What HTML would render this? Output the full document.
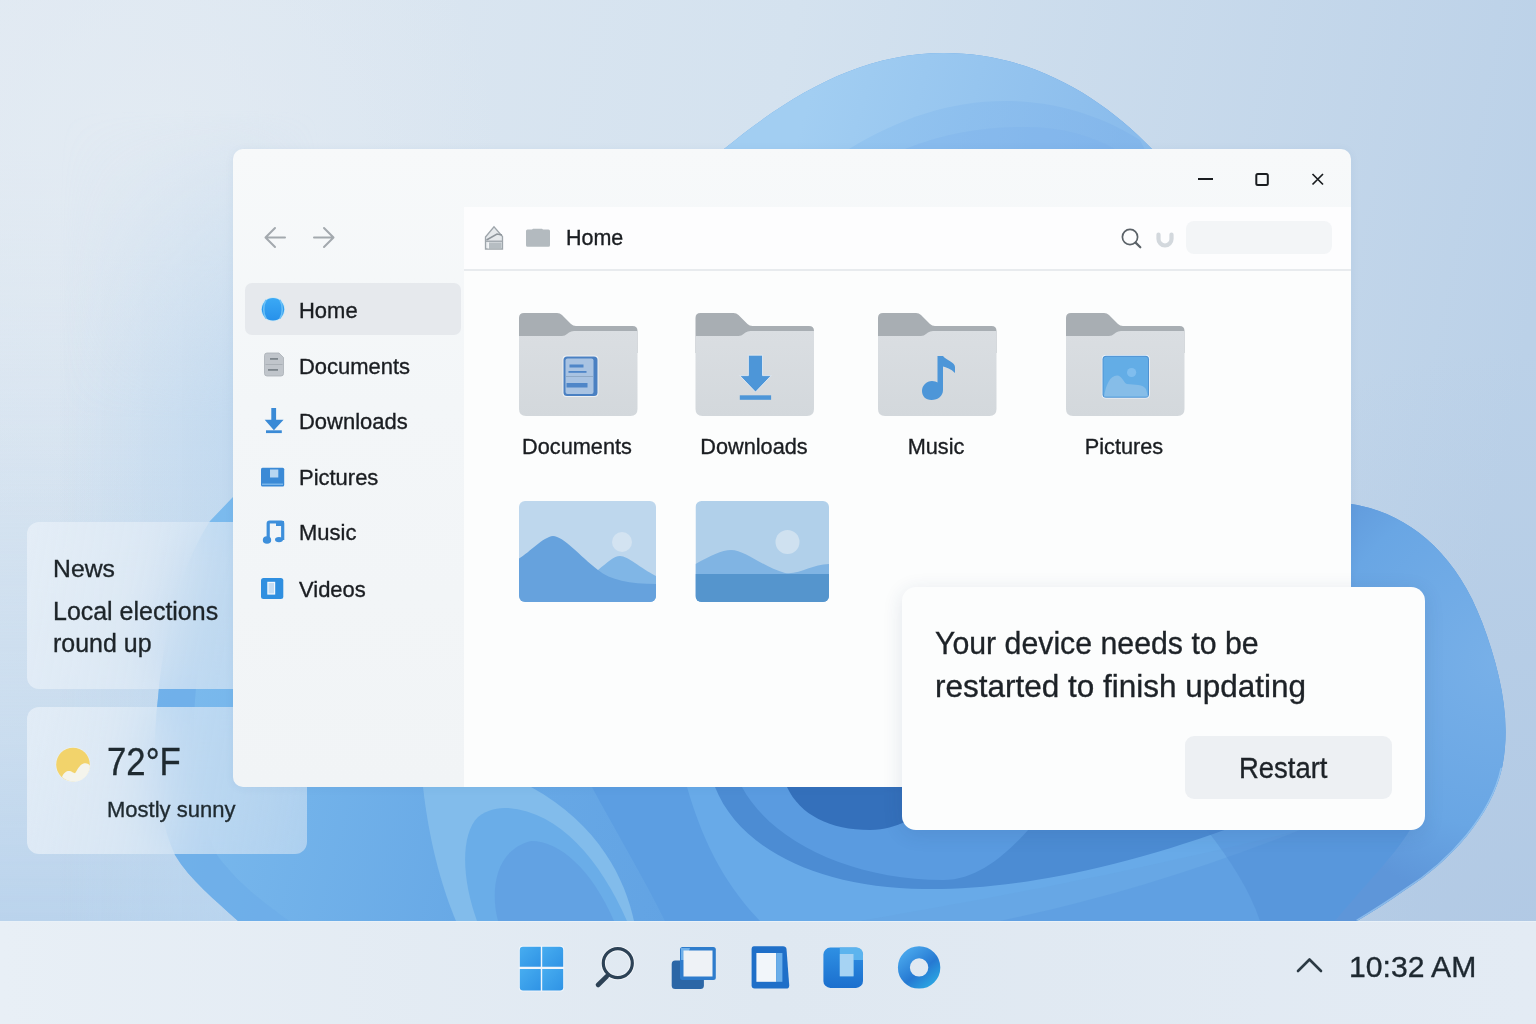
<!DOCTYPE html>
<html><head><meta charset="utf-8">
<style>
html,body{margin:0;padding:0;}
body{width:1536px;height:1024px;position:relative;overflow:hidden;font-family:"Liberation Sans",sans-serif;color:#1c2126;background:#d3e2f0;}
.a{position:absolute;}
.t{position:absolute;white-space:nowrap;line-height:1;-webkit-text-stroke:0.35px currentColor;}
svg{position:absolute;overflow:visible;}
</style></head>
<body>
<svg style="left:0;top:0" width="1536" height="1024" viewBox="0 0 1536 1024">
<defs>
 <linearGradient id="bgg" x1="0" y1="0" x2="1536" y2="300" gradientUnits="userSpaceOnUse">
  <stop offset="0" stop-color="#e0e9f2"/>
  <stop offset="0.5" stop-color="#d4e2ef"/>
  <stop offset="1" stop-color="#bbd1e8"/>
 </linearGradient>
 <linearGradient id="bgv" x1="0" y1="150" x2="0" y2="920" gradientUnits="userSpaceOnUse">
  <stop offset="0" stop-color="#bed6ed" stop-opacity="0"/>
  <stop offset="0.5" stop-color="#bed6ed" stop-opacity="0.35"/>
  <stop offset="0.75" stop-color="#bed6ed" stop-opacity="0.6"/>
  <stop offset="1" stop-color="#bad3ec" stop-opacity="1"/>
 </linearGradient>
 <linearGradient id="bgh" x1="0" y1="0" x2="1536" y2="0" gradientUnits="userSpaceOnUse">
  <stop offset="0" stop-color="#fff"/>
  <stop offset="0.45" stop-color="#fff"/>
  <stop offset="0.8" stop-color="#000"/>
 </linearGradient>
 <radialGradient id="rdark" cx="1536" cy="950" r="600" gradientUnits="userSpaceOnUse">
  <stop offset="0" stop-color="#abc4e2" stop-opacity="0.6"/>
  <stop offset="1" stop-color="#abc4e2" stop-opacity="0"/>
 </radialGradient>
 <linearGradient id="glowl" x1="60" y1="0" x2="320" y2="0" gradientUnits="userSpaceOnUse">
  <stop offset="0" stop-color="#b9d5ef" stop-opacity="0"/>
  <stop offset="0.67" stop-color="#b9d5ef" stop-opacity="0.7"/>
  <stop offset="1" stop-color="#b9d5ef" stop-opacity="0"/>
 </linearGradient>
 <linearGradient id="glowv" x1="0" y1="110" x2="0" y2="420" gradientUnits="userSpaceOnUse">
  <stop offset="0" stop-color="#fff" stop-opacity="0"/>
  <stop offset="1" stop-color="#fff" stop-opacity="1"/>
 </linearGradient>
 <mask id="mglow"><rect x="0" y="0" width="400" height="1024" fill="url(#glowv)"/></mask>
 <mask id="mleft"><rect width="1536" height="1024" fill="url(#bgh)"/></mask>
 <radialGradient id="bgl" cx="120" cy="160" r="380" gradientUnits="userSpaceOnUse">
  <stop offset="0" stop-color="#e3ebf3" stop-opacity="0.9"/>
  <stop offset="1" stop-color="#e3ebf3" stop-opacity="0"/>
 </radialGradient>
 <linearGradient id="arc" x1="820" y1="60" x2="1120" y2="150" gradientUnits="userSpaceOnUse">
  <stop offset="0" stop-color="#a2cef2"/>
  <stop offset="1" stop-color="#8abcec"/>
 </linearGradient>
 <linearGradient id="arc2" x1="880" y1="100" x2="1120" y2="150" gradientUnits="userSpaceOnUse">
  <stop offset="0" stop-color="#8cc0ef"/>
  <stop offset="1" stop-color="#7fb3ea"/>
 </linearGradient>
 <linearGradient id="body" x1="160" y1="600" x2="1350" y2="920" gradientUnits="userSpaceOnUse">
  <stop offset="0" stop-color="#7dbcee"/>
  <stop offset="0.3" stop-color="#68a9e6"/>
  <stop offset="0.7" stop-color="#5a9be0"/>
  <stop offset="1" stop-color="#5797dd"/>
 </linearGradient>
 <linearGradient id="rlobe" x1="1340" y1="600" x2="1500" y2="700" gradientUnits="userSpaceOnUse">
  <stop offset="0" stop-color="#64a2e4"/>
  <stop offset="1" stop-color="#7ab4ea"/>
 </linearGradient>
 <clipPath id="bloom">
  <path d="M724 149 C790 95 860 53 944 53 C1030 53 1100 95 1152 149 L1300 300 L1351 504 C1405 512 1455 550 1482 622 C1500 670 1512 720 1502 768 C1492 815 1450 862 1405 890 C1388 902 1372 912 1357 921 L238 921 C215 900 190 880 175 855 C155 810 152 750 158 698 C165 620 185 560 210 521 L232 498 L260 470 L300 300 Z"/>
 </clipPath>
 <radialGradient id="rlobe2" cx="1500" cy="660" r="240" gradientUnits="userSpaceOnUse">
  <stop offset="0" stop-color="#78b0e8"/>
  <stop offset="0.7" stop-color="#69a6e4"/>
  <stop offset="1" stop-color="#5e96d9"/>
 </radialGradient>
</defs>
<rect width="1536" height="1024" fill="url(#bgg)"/>
<rect x="0" y="0" width="1536" height="1024" fill="url(#bgv)" mask="url(#mleft)"/>
<rect x="700" y="0" width="836" height="1024" fill="url(#rdark)"/>
<rect x="0" y="0" width="700" height="700" fill="url(#bgl)"/>
<rect x="0" y="100" width="320" height="830" fill="url(#glowl)" mask="url(#mglow)"/>
<g clip-path="url(#bloom)">
<rect x="100" y="40" width="1436" height="900" fill="url(#body)"/>
<!-- top arc -->
<rect x="700" y="40" width="500" height="110" fill="url(#arc)"/>
<path d="M849 149 C900 118 950 101 1005 101 C1060 101 1105 118 1140 140 L1150 160 L840 160 Z" fill="url(#arc2)" opacity="0.6"/>
<path d="M905 149 C945 133 985 127 1025 127 C1060 127 1090 135 1115 149 Z" fill="#7cb1ea" opacity="0.3"/>
<!-- right lobe -->
<!-- left lobe inner light band -->
<path d="M217 855 C200 820 190 760 195 700 C200 640 215 580 233 540 L100 540 L100 921 L289 921 C260 900 235 880 217 855 Z" fill="#6cace8" opacity="0.7"/>
<!-- bottom tongue -->
<path d="M423 787 C430 850 445 895 456 921 L634 921 C625 880 600 825 531 787 Z" fill="#82bceb"/>
<path d="M477 921 C462 880 460 835 478 817 C488 809 498 808 508 808 C560 812 600 860 627 921 Z" fill="#6aade8"/>
<path d="M498 921 C490 890 495 850 531 841 C560 841 592 870 614 921 Z" fill="#62a2e3"/>
<!-- sweeping bands -->
<path d="M592 787 C615 830 645 880 665 921 L1357 921 L1410 830 L1420 787 Z" fill="#5c9ee2"/>
<path d="M687 787 C705 850 730 890 760 921 L1357 921 L1410 830 L1420 787 Z" fill="#68aae8"/>
<path d="M715 787 C740 850 820 888 924 889 C1000 890 1100 875 1230 828 L1240 787 Z" fill="#4c8cd3"/>
<path d="M742 787 C770 840 850 880 943 880 C980 880 1010 850 1030 828 L1030 787 Z" fill="#5a9be0"/>
<path d="M787 787 C800 815 830 830 870 830 C885 830 895 826 905 822 L905 787 Z" fill="#3470bb"/>
<path d="M860 921 C950 905 1100 880 1300 830 L1410 830 L1357 921 Z" fill="#66a6e4" opacity="0.8"/>
<path d="M1000 921 C1100 900 1200 870 1300 830 L1410 830 L1357 921 Z" fill="#5a9adf" opacity="0.5"/>
<path d="M1207 830 L1410 830 L1357 921 L1260 921 C1250 890 1230 860 1207 830 Z" fill="#4a88d0" opacity="0.35"/>
<!-- right lobe overlay -->
<path d="M1351 480 L1600 480 L1600 930 L1335 921 C1365 885 1395 855 1410 830 L1351 830 Z" fill="url(#rlobe2)"/>
<path d="M1502 768 C1492 815 1450 862 1405 890 C1388 902 1372 912 1357 921" fill="none" stroke="#a8d2f5" stroke-width="3" opacity="0.6"/>
</g>
</svg>
<div class="a" style="left:27px;top:522px;width:260px;height:167px;border-radius:12px;background:linear-gradient(100deg,rgba(233,241,249,0.74),rgba(220,233,246,0.62));backdrop-filter:blur(30px) saturate(0.85)"></div>
<div class="a" style="left:27px;top:707px;width:280px;height:147px;border-radius:12px;background:linear-gradient(100deg,rgba(233,241,249,0.74),rgba(220,233,246,0.55));backdrop-filter:blur(30px) saturate(0.9)"></div>
<div class="t" style="left:52.7px;top:557.1px;font-size:24.4px;color:#1d2429;transform:scaleX(1.015);transform-origin:0 0;">News</div>
<div class="t" style="left:52.8px;top:598.0px;font-size:26px;color:#1d2429;transform:scaleX(0.96);transform-origin:0 0;">Local elections</div>
<div class="t" style="left:52.8px;top:630.3px;font-size:26px;color:#1d2429;transform:scaleX(0.96);transform-origin:0 0;">round up</div>
<svg style="left:0;top:0" width="200" height="900"><circle cx="73" cy="764.5" r="17.5" fill="#f0f4f0" opacity="0.6"/><circle cx="73" cy="764.5" r="16.8" fill="#f2d36b"/><path d="M62 777 C64 772 67 770.5 70 771 C72 771.5 73 773 75 773.2 C77 771 79 765 83.5 763.5 C86 762.7 89 763.5 90 766 C89.5 772 86 778 80 780.5 C75 782.5 67 782 62 777 Z" fill="#f4f4ec"/></svg>
<div class="t" style="left:107.0px;top:743.1px;font-size:38px;color:#1f2a30;transform:scaleX(0.915);transform-origin:0 0;">72°F</div>
<div class="t" style="left:107.0px;top:798.9px;font-size:22px;color:#1f2a30;">Mostly sunny</div>
<div class="a" style="left:233px;top:149px;width:1118px;height:638px;border-radius:10px;background:linear-gradient(180deg,#f7f9fa,#f3f6f8 40%,#f1f4f6);box-shadow:0 1px 10px rgba(40,80,130,0.06);overflow:hidden"><div class="a" style="left:231px;top:58px;width:887px;height:580px;background:#fcfdfd"></div><div class="a" style="left:231px;top:58px;width:887px;height:62px;background:#fdfdfe;border-bottom:2px solid #e8ebee"></div></div>
<div class="a" style="left:245px;top:283px;width:216px;height:52px;border-radius:7px;background:#e6e9ed"></div>
<svg style="left:0;top:0" width="1536" height="300"><g fill="none" stroke="#a3a9ae" stroke-width="2" stroke-linecap="round" stroke-linejoin="round"><path d="M285 237.5 H266 M275 228 L265.5 237.5 L275 247"/><path d="M314 237.5 H333 M324 228 L333.5 237.5 L324 247"/></g><g fill="none" stroke="#1a1d20" stroke-width="2"><path d="M1198 179 H1213"/><rect x="1256.3" y="174" width="11.5" height="11" rx="1.5"/><path d="M1312.5 174 L1323 184.5 M1323 174 L1312.5 184.5" stroke-width="1.7"/></g></svg>
<div class="a" style="left:1185.5px;top:221px;width:146px;height:33px;border-radius:8px;background:#f3f5f7"></div>
<svg style="left:0;top:0" width="1536" height="1024"><defs><linearGradient id="fgrad" x1="0" y1="0" x2="0" y2="1"><stop offset="0" stop-color="#dadee2"/><stop offset="1" stop-color="#d3d8dc"/></linearGradient><linearGradient id="hb" x1="0" y1="0" x2="0" y2="1"><stop offset="0" stop-color="#3ba9f5"/><stop offset="1" stop-color="#2791ea"/></linearGradient><linearGradient id="tb1" x1="0" y1="0" x2="1" y2="1"><stop offset="0" stop-color="#4aaef0"/><stop offset="1" stop-color="#2a90e4"/></linearGradient><linearGradient id="tb5" x1="0" y1="0" x2="0" y2="1"><stop offset="0" stop-color="#2d8ee2"/><stop offset="1" stop-color="#1b70cf"/></linearGradient><linearGradient id="tb6" x1="0" y1="0" x2="1" y2="1"><stop offset="0" stop-color="#4aa0e8"/><stop offset="0.55" stop-color="#2a7fd6"/><stop offset="1" stop-color="#2bb0e4"/></linearGradient></defs><path d="M519 318 Q519 313 524 313 L557 313 Q560 313 562 315 L571 324 Q573 326 576 326 L632.5 326 Q637.5 326 637.5 331 L637.5 353 L519 353 Z" fill="#a8aeb3"/><path d="M519 336 L562 336 Q565 336 567 334 L569 332.5 Q571 331 574 331 L637.5 331 L637.5 409 Q637.5 416 630.5 416 L526 416 Q519 416 519 409 Z" fill="url(#fgrad)"/><path d="M695.5 318 Q695.5 313 700.5 313 L733.5 313 Q736.5 313 738.5 315 L747.5 324 Q749.5 326 752.5 326 L809.0 326 Q814.0 326 814.0 331 L814.0 353 L695.5 353 Z" fill="#a8aeb3"/><path d="M695.5 336 L738.5 336 Q741.5 336 743.5 334 L745.5 332.5 Q747.5 331 750.5 331 L814.0 331 L814.0 409 Q814.0 416 807.0 416 L702.5 416 Q695.5 416 695.5 409 Z" fill="url(#fgrad)"/><path d="M878 318 Q878 313 883 313 L916 313 Q919 313 921 315 L930 324 Q932 326 935 326 L991.5 326 Q996.5 326 996.5 331 L996.5 353 L878 353 Z" fill="#a8aeb3"/><path d="M878 336 L921 336 Q924 336 926 334 L928 332.5 Q930 331 933 331 L996.5 331 L996.5 409 Q996.5 416 989.5 416 L885 416 Q878 416 878 409 Z" fill="url(#fgrad)"/><path d="M1066 318 Q1066 313 1071 313 L1104 313 Q1107 313 1109 315 L1118 324 Q1120 326 1123 326 L1179.5 326 Q1184.5 326 1184.5 331 L1184.5 353 L1066 353 Z" fill="#a8aeb3"/><path d="M1066 336 L1109 336 Q1112 336 1114 334 L1116 332.5 Q1118 331 1121 331 L1184.5 331 L1184.5 409 Q1184.5 416 1177.5 416 L1073 416 Q1066 416 1066 409 Z" fill="url(#fgrad)"/><g><rect x="562.5" y="355.5" width="36" height="41.5" rx="4" fill="#fff" opacity="0.6"/><rect x="563.5" y="356.5" width="34" height="39.5" rx="3.5" fill="#4a80c2"/><rect x="565.5" y="358.5" width="28" height="35.5" rx="2" fill="#a9c3e2"/><rect x="569.5" y="364.5" width="14" height="3" fill="#4f86c8"/><rect x="568.5" y="371" width="18" height="1.8" fill="#4f86c8"/><rect x="566" y="376" width="27" height="1" fill="#8fa9c6"/><rect x="566.5" y="383" width="21" height="4.5" fill="#4f86c8"/></g><path d="M748.4 355.2 H762.5 V375.6 H771.2 L755.5 392 L739.8 375.6 H748.4 Z" fill="#4d96d8" stroke="#e8eef4" stroke-width="0.8"/><rect x="739.8" y="395.3" width="31.3" height="4.5" fill="#4d96d8"/><path d="M937.5 356 L943 356 C946 360 955 362 955 367 L955 373 C951 369 946 367 943 366.5 L943 390 C943 396 938 400 931.5 400 C925.5 400 922 396 922 391 C922 385.5 926.5 381 932 381 C934.5 381 936.5 381.8 937.5 382.5 Z" fill="#4d96d8"/><rect x="1101.8" y="355" width="48" height="43.5" rx="4" fill="#f0f6fb"/><rect x="1102.5" y="355.7" width="46.5" height="42" rx="3.5" fill="#4f92d2"/><rect x="1103.5" y="356.7" width="44.5" height="40" rx="3" fill="#63ade6"/><circle cx="1131.6" cy="372.5" r="4.6" fill="#7fbdee"/><path d="M1104 396.5 C1106 385 1110 375.5 1117 375.5 C1122 375.5 1124 383.5 1127 384 C1135 385 1143 384 1146 389 L1148 396.5 Z" fill="#86bde8"/><defs><clipPath id="th1"><rect x="519" y="501" width="137" height="101" rx="6"/></clipPath><clipPath id="th2"><rect x="695.5" y="501" width="133.5" height="101" rx="6"/></clipPath></defs><g clip-path="url(#th1)"><rect x="519" y="501" width="137" height="101" fill="#bed7ed"/><circle cx="622" cy="542" r="10" fill="#d3e3f1"/><path d="M598 570 C608 562 614 556 620 556 C628 556 640 568 656 576 L656 602 L598 602 Z" fill="#80b6e6"/><path d="M519 558.5 C530 552 543 537 553 536 C563 536 580 556 598 570 C610 580 630 584 656 584 L656 602 L519 602 Z" fill="#66a2dd"/></g><g clip-path="url(#th2)"><rect x="695.5" y="501" width="133.5" height="101" fill="#b1d0ea"/><circle cx="787.5" cy="542" r="12" fill="#cfe1f0"/><path d="M695.5 564 C710 556 722 550 731 550 C745 550 765 568 785 573 C800 575 812 564 829 564 L829 602 L695.5 602 Z" fill="#80b4e3"/><rect x="695.5" y="574" width="133.5" height="28" fill="#5595cd"/></g><circle cx="273" cy="309.3" r="12" fill="#b9e6fa" opacity="0.7"/><circle cx="273" cy="309.3" r="11.2" fill="url(#hb)"/><path d="M266 300 C263 305 263 314 266 318.5" stroke="#6cc0f6" stroke-width="1.5" fill="none"/><path d="M280 300 C283 305 283 314 280 318.5" stroke="#6cc0f6" stroke-width="1.5" fill="none"/><path d="M264.5 355.5 Q264.5 353 267 353 L279 353 L283.5 357.5 L283.5 373.5 Q283.5 376 281 376 L267 376 Q264.5 376 264.5 373.5 Z" fill="#c0c5cb" stroke="#aab0b6" stroke-width="0.8"/><rect x="270" y="358" width="8" height="1.8" fill="#7d858c"/><rect x="265.5" y="364" width="17" height="0.8" fill="#a4abb1"/><rect x="268" y="369" width="10" height="1.8" fill="#7d858c"/><path d="M271.3 408 H276.1 V419.8 H283.6 L273.9 430.3 L264.7 419.8 H271.3 Z" fill="#3a8ad6"/><rect x="266" y="430.3" width="15.8" height="2.8" fill="#3a8ad6"/><rect x="261" y="467.7" width="23.2" height="18.9" rx="1.5" fill="#3b8ad6"/><rect x="270" y="469.5" width="8.3" height="8" fill="#b7d6f1"/><rect x="262" y="483.5" width="21" height="1.5" fill="#79b5ea"/><path d="M268.2 540 V523.5 Q268.2 522 269.7 522 H281.2 Q282.7 522 282.7 523.5 V540" fill="none" stroke="#3d8fdb" stroke-width="3.2"/><ellipse cx="267" cy="540" rx="4.2" ry="3.8" fill="#3d8fdb"/><ellipse cx="279" cy="539.6" rx="4" ry="2.6" fill="#3d8fdb"/><rect x="276" y="521" width="8" height="5" fill="#3d8fdb"/><rect x="261" y="577.9" width="22.3" height="21.1" rx="2.5" fill="#2f8fe0"/><rect x="267.3" y="581.8" width="7.9" height="12.8" fill="#f4f9fd"/><rect x="268.5" y="583" width="5.5" height="10.4" fill="#c5ddf3"/><path d="M485.5 237 L494 226.8 L502.5 236.5 L502.5 249 L485.5 249 Z" fill="#e6e9ec" stroke="#9ea5ab" stroke-width="1.3"/><path d="M486.5 240 L497 234 L502 235" stroke="#8e959b" stroke-width="1.5" fill="none"/><rect x="486" y="240.5" width="16" height="1.5" fill="#a5acb2"/><rect x="489" y="242.5" width="12.5" height="6" fill="#b6bdc2"/><rect x="487.5" y="242.5" width="1.5" height="6" fill="#f2f4f6"/><path d="M526 231 Q526 229.5 527.5 229.5 L532 229.5 L533 228.8 L542 228.8 L543 229.5 L548.5 229.5 Q550 229.5 550 231 L550 245.3 Q550 246.8 548.5 246.8 L527.5 246.8 Q526 246.8 526 245.3 Z" fill="#b3babf"/><circle cx="1130" cy="237" r="7.6" fill="none" stroke="#5b6268" stroke-width="1.7"/><path d="M1135.6 242.6 L1140.3 247.3" stroke="#5b6268" stroke-width="2.2" stroke-linecap="round"/><path d="M1158.5 234.5 V239 A6.5 6.5 0 0 0 1171.5 239 V234.5" fill="none" stroke="#d3d8dd" stroke-width="4.2" stroke-linecap="round"/></svg>
<div class="t" style="left:298.8px;top:300.1px;font-size:22.2px;color:#1a1d21;transform:scaleX(0.99);transform-origin:0 0;">Home</div>
<div class="t" style="left:298.8px;top:355.8px;font-size:22.2px;color:#1a1d21;transform:scaleX(0.99);transform-origin:0 0;">Documents</div>
<div class="t" style="left:298.8px;top:411.1px;font-size:22.2px;color:#1a1d21;transform:scaleX(0.99);transform-origin:0 0;">Downloads</div>
<div class="t" style="left:298.8px;top:466.5px;font-size:22.2px;color:#1a1d21;transform:scaleX(0.99);transform-origin:0 0;">Pictures</div>
<div class="t" style="left:298.8px;top:521.8px;font-size:22.2px;color:#1a1d21;transform:scaleX(0.99);transform-origin:0 0;">Music</div>
<div class="t" style="left:298.8px;top:578.5px;font-size:22.2px;color:#1a1d21;transform:scaleX(0.99);transform-origin:0 0;">Videos</div>
<div class="t" style="left:566.0px;top:227.3px;font-size:21.8px;color:#1a1d21;transform:scaleX(0.985);transform-origin:0 0;">Home</div>
<div class="t" style="left:376.5px;width:400px;text-align:center;top:436.6px;font-size:21.5px;color:#1a1d21;transform:scaleX(1.01);transform-origin:50% 0;">Documents</div>
<div class="t" style="left:553.7px;width:400px;text-align:center;top:436.6px;font-size:21.5px;color:#1a1d21;transform:scaleX(1.01);transform-origin:50% 0;">Downloads</div>
<div class="t" style="left:736.3px;width:400px;text-align:center;top:436.6px;font-size:21.5px;color:#1a1d21;transform:scaleX(1.01);transform-origin:50% 0;">Music</div>
<div class="t" style="left:923.9px;width:400px;text-align:center;top:436.6px;font-size:21.5px;color:#1a1d21;transform:scaleX(1.01);transform-origin:50% 0;">Pictures</div>
<div class="a" style="left:902px;top:587px;width:523px;height:243px;border-radius:14px;background:#fcfdfd;box-shadow:0 4px 20px rgba(30,60,110,0.12)"></div>
<div class="a" style="left:1185px;top:735.5px;width:207px;height:63px;border-radius:9px;background:#edf0f3"></div>
<div class="t" style="left:935.0px;top:627.4px;font-size:32px;color:#1d2227;transform:scaleX(0.946);transform-origin:0 0;">Your device needs to be</div>
<div class="t" style="left:934.8px;top:670.4px;font-size:32px;color:#1d2227;transform:scaleX(0.984);transform-origin:0 0;">restarted to finish updating</div>
<div class="t" style="left:1239.0px;top:753.8px;font-size:28.6px;color:#1d2227;transform:scaleX(0.96);transform-origin:0 0;">Restart</div>
<div class="a" style="left:0;top:921px;width:1536px;height:103px;background:linear-gradient(90deg,#e8eff6,#dfe8f1 50%,#e3ebf4);border-top:1px solid #e9f1f8"></div>
<svg style="left:0;top:0" width="1536" height="1024"><defs><linearGradient id="w11" x1="0" y1="0" x2="1" y2="1"><stop offset="0" stop-color="#47adf0"/><stop offset="1" stop-color="#2f93e5"/></linearGradient><linearGradient id="i5" x1="0" y1="0" x2="0" y2="1"><stop offset="0" stop-color="#2f90e3"/><stop offset="1" stop-color="#1b6fce"/></linearGradient><linearGradient id="i6" x1="0.1" y1="0" x2="0.9" y2="1"><stop offset="0" stop-color="#46a3ea"/><stop offset="0.6" stop-color="#2679d2"/><stop offset="1" stop-color="#2a9fe0"/></linearGradient></defs><rect x="518.8" y="945.7" width="45.4" height="45.8" rx="4" fill="#f4f8fc" opacity="0.8"/><path d="M523 946.7 H540.8 V966.7 H519.8 V950 Q519.8 946.7 523 946.7 Z" fill="url(#w11)"/><path d="M542.2 946.7 H560 Q563.2 946.7 563.2 950 V966.7 H542.2 Z" fill="url(#w11)"/><path d="M519.8 969 H540.8 V990.5 H523 Q519.8 990.5 519.8 987.3 Z" fill="url(#w11)"/><path d="M542.2 969 H563.2 V987.3 Q563.2 990.5 560 990.5 H542.2 Z" fill="url(#w11)"/><circle cx="617.8" cy="963.2" r="14.5" fill="none" stroke="#f2f6fa" stroke-width="5"/><circle cx="617.8" cy="963.2" r="14.5" fill="none" stroke="#2d4256" stroke-width="3.2"/><path d="M598 985 L606.8 976.3" stroke="#2d4256" stroke-width="4.6" stroke-linecap="round"/><rect x="671.7" y="960.4" width="32.2" height="28.7" rx="3.5" fill="#2b66a6"/><rect x="680" y="947.1" width="35.8" height="32.9" rx="2.5" fill="#2e7ccc"/><path d="M681 948 L690 948 L686 960 L681 960 Z" fill="#6fb0ea"/><rect x="683.5" y="950.5" width="29" height="26" fill="#eef2f6"/><path d="M754 946.2 H783 Q786 946.2 786.5 949 L789.2 985 Q789.4 988.6 786 988.6 H754.6 Q751.6 988.6 751.6 985.6 V949.5 Q751.6 946.2 754 946.2 Z" fill="#1f6fc8"/><rect x="756.4" y="953" width="19.8" height="28.8" fill="#f2f6fa"/><rect x="776.2" y="953" width="6.2" height="28.8" fill="#6aaeea"/><rect x="823.4" y="947.6" width="39.6" height="40.3" rx="7" fill="url(#i5)"/><path d="M839.8 947.6 H856 Q863 947.6 863 954.6 V960 L853.5 960 L853.5 976.3 H839.8 Z" fill="#62b8f0" opacity="0.9"/><rect x="839.8" y="954" width="13.7" height="22.3" fill="#a6d3f3"/><circle cx="919.1" cy="967.4" r="15.2" fill="none" stroke="url(#i6)" stroke-width="12"/><path d="M1298 971 L1309.5 959.5 L1321 971" fill="none" stroke="#2c3a44" stroke-width="2.6" stroke-linecap="round" stroke-linejoin="round"/></svg>
<div class="t" style="left:1349.2px;top:952.3px;font-size:29.4px;color:#1e2830;transform:scaleX(1.025);transform-origin:0 0;">10:32 AM</div>
</body></html>
